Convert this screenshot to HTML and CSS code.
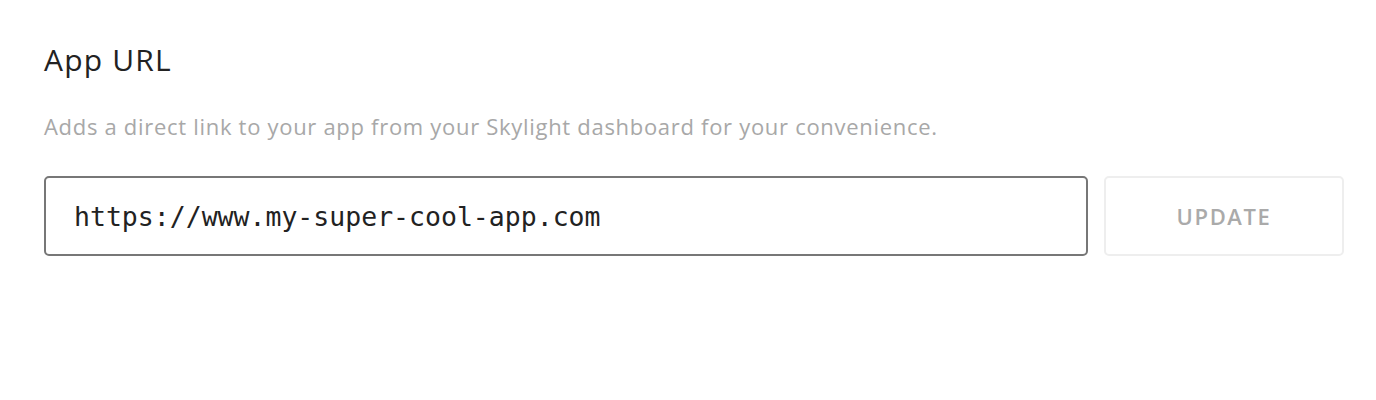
FILE: index.html
```html
<!DOCTYPE html>
<html>
<head>
<meta charset="utf-8">
<link rel="stylesheet" href="styles.css">
</head>
<body>
<section class="setting">
  <h2 class="title">App URL</h2>
  <p class="desc">Adds a direct link to your app from your Skylight dashboard for your convenience.</p>
  <form class="row">
    <input class="url" type="text" value="https://www.my-super-cool-app.com">
    <button class="update" type="button">UPDATE</button>
  </form>
</section>
</body>
</html>
```
FILE: styles.css
```css
html, body {
  margin: 0;
  padding: 0;
  background: #fff;
}
.setting {
  padding: 39px 32px 0 44px;
  font-family: "Open Sans", Lato, sans-serif;
}
.title {
  margin: 0;
  font-size: 30px;
  font-weight: 400;
  letter-spacing: 1.2px;
  color: #222;
  line-height: 42px;
}
.desc {
  margin: 32px 0 0;
  font-size: 22px;
  line-height: 26px;
  letter-spacing: 0.7px;
  color: #a8a8a8;
}
.row {
  display: flex;
  gap: 16px;
  margin-top: 37px;
}
.url {
  flex: 1;
  height: 80px;
  box-sizing: border-box;
  border: 2px solid #777;
  border-radius: 5px;
  padding: 0 28px;
  font-family: "DejaVu Sans Mono", monospace;
  font-size: 26.5px;
  color: #222;
  outline: none;
}
.update {
  width: 240px;
  height: 80px;
  box-sizing: border-box;
  border: 2px solid #eeeeee;
  border-radius: 5px;
  background: #fff;
  font-family: "Open Sans", sans-serif;
  font-weight: 600;
  font-size: 22px;
  letter-spacing: 1.6px;
  color: #aaaaaa;
}
```
